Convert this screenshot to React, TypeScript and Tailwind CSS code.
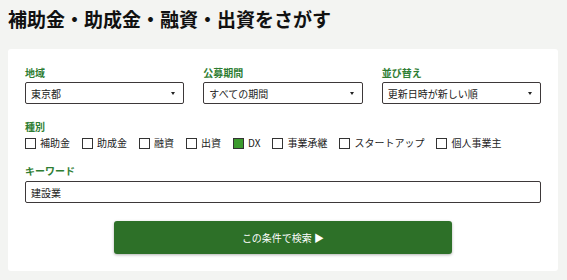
import React, { useState } from 'react';

const TYPES = ['補助金', '助成金', '融資', '出資', 'DX', '事業承継', 'スタートアップ', '個人事業主'];

function SelectBox({ label, value }: { label: string; value: string }) {
  return (
    <div className="flex flex-col">
      <div className="text-[10px] leading-[14px] font-bold text-[#2e7d32] mb-[2px]">{label}</div>
      <div className="h-[22px] border-[1.5px] border-[#3d3839] rounded-[2px] bg-white flex items-center justify-between pl-[5px] pr-[8px]">
        <span className="text-[10px] text-[#222]">{value}</span>
        <span className="w-0 h-0 border-l-[2.5px] border-r-[2.5px] border-t-[3px] border-l-transparent border-r-transparent border-t-[#222]" />
      </div>
    </div>
  );
}

export default function App() {
  const [checked, setChecked] = useState<string[]>(['DX']);
  const toggle = (t: string) =>
    setChecked(c => (c.includes(t) ? c.filter(x => x !== t) : [...c, t]));

  return (
    <div
      className="w-[567px] h-[280px] bg-[#f3f4f2] px-[8px] pt-[6px] overflow-hidden"
      style={{ fontFamily: '"Noto Sans CJK JP", "Noto Sans", sans-serif' }}
    >
      <h1 className="text-[19px] leading-[26px] font-bold text-[#111] mb-[17px]">
        補助金・助成金・融資・出資をさがす
      </h1>

      <div className="bg-white rounded-[3px] px-[17px] pt-[17px] pb-[17px] w-[550px]">
        <div className="grid grid-cols-3 gap-[19px]">
          <SelectBox label="地域" value="東京都" />
          <SelectBox label="公募期間" value="すべての期間" />
          <SelectBox label="並び替え" value="更新日時が新しい順" />
        </div>

        <div className="mt-[16px] text-[10px] leading-[14px] font-bold text-[#2e7d32]">種別</div>
        <div className="flex items-center gap-[12px] mt-[2px]">
          {TYPES.map(t => {
            const on = checked.includes(t);
            return (
              <label key={t} className="flex items-center gap-[4px] cursor-pointer" onClick={() => toggle(t)}>
                <span
                  className={
                    on
                      ? 'w-[11px] h-[11px] border-[1.5px] border-[#333] bg-[#3c9a2e]'
                      : 'w-[11px] h-[11px] border-[1.5px] border-[#333] bg-white'
                  }
                />
                <span className="text-[10px] leading-[14px] text-[#222]">{t}</span>
              </label>
            );
          })}
        </div>

        <div className="mt-[14px] text-[10px] leading-[14px] font-bold text-[#2e7d32] mb-[3px]">キーワード</div>
        <div className="h-[22px] border-[1.5px] border-[#3d3839] rounded-[2px] flex items-center pl-[5px]">
          <span className="text-[10px] text-[#222]">建設業</span>
        </div>

        <div className="flex justify-center mt-[18px]">
          <button className="w-[338px] h-[33px] bg-[#2d7028] rounded-[3px] text-white text-[10px] shadow-[0_1px_3px_rgba(0,0,0,0.3)]">
            この条件で検索 ▶
          </button>
        </div>
      </div>
    </div>
  );
}
